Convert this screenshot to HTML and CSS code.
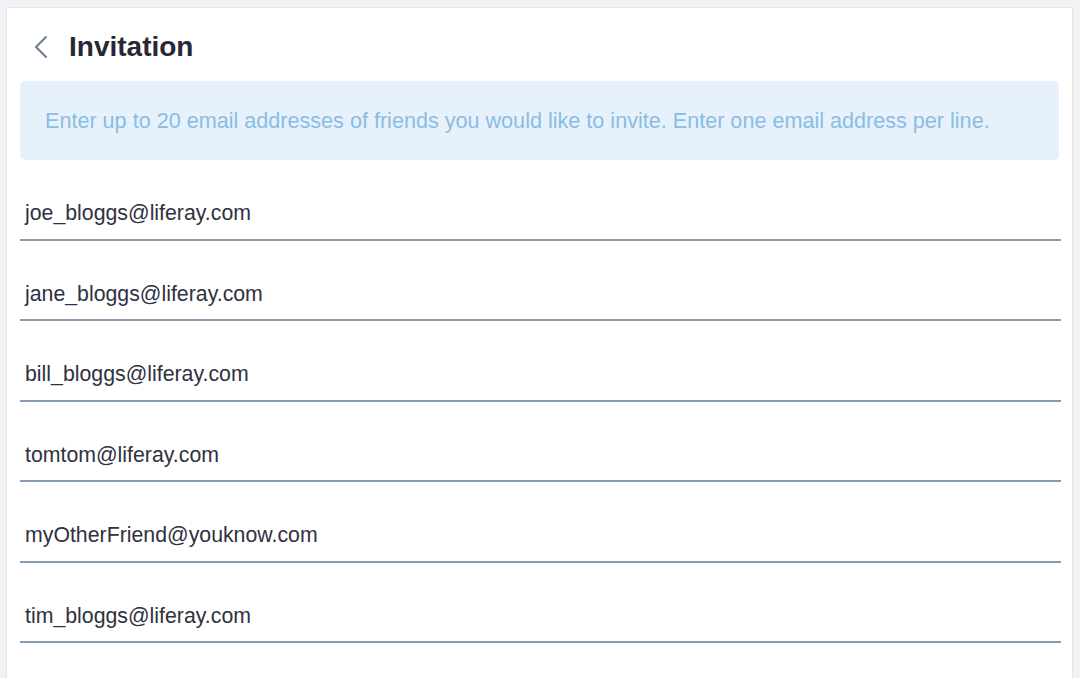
FILE: index.html
```html
<!DOCTYPE html>
<html>
<head>
<meta charset="utf-8">
<link rel="stylesheet" href="styles.css">
</head>
<body>
<div class="card">
  <div class="header">
    <svg class="back" width="14" height="24" viewBox="0 0 14 24"><path d="M12 2 L2 12 L12 22" fill="none" stroke="#6b7c93" stroke-width="2" stroke-linecap="round" stroke-linejoin="round"/></svg>
    <h1 class="title">Invitation</h1>
  </div>
  <div class="info">Enter up to 20 email addresses of friends you would like to invite. Enter one email address per line.</div>
  <div class="emails">
    <div class="email">joe_bloggs@liferay.com</div>
    <div class="email">jane_bloggs@liferay.com</div>
    <div class="email">bill_bloggs@liferay.com</div>
    <div class="email">tomtom@liferay.com</div>
    <div class="email">myOtherFriend@youknow.com</div>
    <div class="email">tim_bloggs@liferay.com</div>
  </div>
</div>
</body>
</html>
```
FILE: styles.css
```css
html, body {
  margin: 0;
  padding: 0;
  background: #f1f2f5;
  font-family: "Liberation Sans", Arial, sans-serif;
  overflow: hidden;
  height: 678px;
}
.card {
  margin: 7px 0 0 6px;
  width: 1067px;
  height: 671px;
  background: #fff;
  border: 1px solid #e3e5ea;
  border-bottom: none;
  padding: 0 11px 0 13px;
  box-sizing: border-box;
  overflow: hidden;
}
.header {
  display: flex;
  align-items: center;
  height: 73px;
  padding-left: 14px;
}
.back {
  display: block;
  margin-top: 4px;
}
.title {
  margin: 5px 0 0 21px;
  font-size: 28px;
  font-weight: bold;
  color: #272833;
  line-height: 32px;
}
.info {
  background: #e6f1fb;
  color: #8bbde3;
  border-radius: 5px;
  height: 79px;
  margin-right: 2px;
  padding: 0 25px;
  display: flex;
  align-items: center;
  font-size: 21.6px;
  box-sizing: border-box;
}
.email {
  height: 80.5px;
  box-sizing: border-box;
  padding: 41px 0 0 5px;
  line-height: 24px;
  font-size: 21.3px;
  color: #30313f;
  border-bottom: 2.5px solid #889bb0;
}
```
